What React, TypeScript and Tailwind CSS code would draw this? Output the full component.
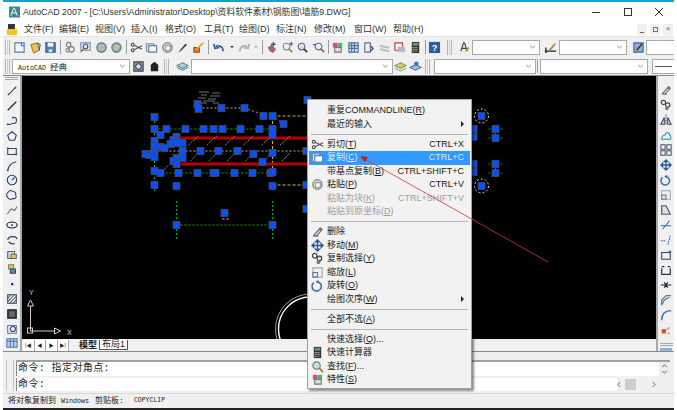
import React from 'react';

const S = ({ children, size = 13 }: { children: React.ReactNode; size?: number }) => (
  <svg viewBox="0 0 14 14" width={size} height={size} fill="none" strokeWidth="1.2">{children}</svg>
);

const icons: Record<string, React.ReactNode> = {
  doc: <><path d="M2 2h10v10H2z" fill="#f4f8ff" stroke="#4a7fb5" /><path d="M9 2v3h3" stroke="#4a7fb5" /></>,
  open: <><path d="M2 4 9 2l2 8-6 3z" fill="#e8c06a" stroke="#a08030" /><path d="M9 2l3 2-1 6" stroke="#555" /></>,
  save: <><path d="M2 2h10v10H2z" fill="#4e83c0" stroke="#2a5a90" /><path d="M4 2h6v4H4z" fill="#fff" /><path d="M5 9h4v3H5z" fill="#ddd" /></>,
  print: <><circle cx="5" cy="4" r="2.5" stroke="#777" /><circle cx="8" cy="9" r="3" stroke="#777" /><circle cx="4" cy="10" r="2" stroke="#888" /></>,
  preview: <><path d="M2 2h10v8H2z" fill="#eef" stroke="#6b8db5" /><circle cx="7" cy="6" r="2.5" stroke="#456" /><path d="M5 8 2 12" stroke="#a07030" strokeWidth="1.6" /></>,
  publish: <><circle cx="7" cy="7" r="5" fill="#9ab8d8" stroke="#4a6a8a" /><path d="M4 5h6M4 9h6" stroke="#e0c040" strokeWidth="1.6" /></>,
  globe: <><circle cx="7" cy="7" r="5" fill="#7aa7d8" stroke="#5a7a9a" /><path d="M6 3 3 8l5 3 3-5z" fill="#d0c070" /></>,
  cut: <><circle cx="3" cy="4" r="1.6" stroke="#444" /><circle cx="3" cy="10" r="1.6" stroke="#444" /><path d="M4.5 4.5 13 9M4.5 9.5 13 5" stroke="#555" /></>,
  copy: <><path d="M1.5 3h8v8h-8z" fill="#d8e4f0" stroke="#7a8fa5" /><path d="M4 5h8.5v7H4z" fill="#f4f8ff" stroke="#5a7fa5" /></>,
  paste: <><circle cx="7" cy="7" r="5" fill="#e8d8a0" stroke="#7a93b5" strokeWidth="1.6" /><path d="M5 5h5v5H5z" fill="#fff" stroke="#999" /></>,
  brush: <><path d="M3 12 5 9l5-6 2 1-6 6z" fill="#444" /><path d="M2 13l2-3 1 1z" fill="#d0a030" /></>,
  block: <><path d="M2 7h6v5H2z" fill="#e88030" stroke="#a05010" /><path d="M6 8 12 2" stroke="#e0b020" strokeWidth="2" /></>,
  undo: <path d="M12 11C12 6 8 4 4 6M2 3l1 5 5-1" stroke="#2a5a9a" strokeWidth="1.7" />,
  redo: <path d="M2 11C2 6 6 4 10 6M12 3l-1 5-5-1" stroke="#aaa" strokeWidth="1.7" />,
  pan: <><path d="M3 7 7 4l5 5-3 4-4-2z" fill="#a06868" /><path d="M9 1v5M6.500 3.500h5" stroke="#2a5a9a" strokeWidth="1.4" /></>,
  zoomr: <><circle cx="6" cy="6" r="3.600" stroke="#889" /><path d="M8.500 8.500 12 12" stroke="#a08040" strokeWidth="1.700" /><path d="M11 1v4M9 3h4" stroke="#2a5a9a" /></>,
  zoomw: <><circle cx="6" cy="6" r="3.600" fill="#dde" stroke="#668" /><path d="M8.500 8.500 12 12" stroke="#333" strokeWidth="1.700" /></>,
  zoomp: <><circle cx="7" cy="6" r="3.600" stroke="#668" /><path d="M9.500 8.500 13 12" stroke="#a06030" strokeWidth="1.700" /><path d="M1 4h3" stroke="#2a5a9a" /></>,
  props: <><path d="M2 2h5v5H2z" fill="#e040a0" /><path d="M7 2h5v5H7z" fill="#40c060" /><path d="M4 7h7v5H4z" fill="#ddd" stroke="#777" /></>,
  design: <><path d="M2 2h10v10H2z" fill="#dbe6f4" stroke="#4a6fa5" /><path d="M2 5h10M2 8h10M5 2v10M8 2v10" stroke="#4a6fa5" /></>,
  sheet: <><path d="M3 2h6v10H3z" fill="#eee" stroke="#668" /><path d="M9 5l3 3-3 3" stroke="#2a5a9a" strokeWidth="1.500" /></>,
  tool: <><path d="M2 4l10 2v6L2 10z" fill="#b8c0c8" /><path d="M2 7l10 2" stroke="#eee" /></>,
  markup: <><path d="M2 2h8v8H2z" fill="#fff" stroke="#d03030" /><path d="M5 6h8v6H5z" fill="#bbb" /></>,
  calc: <><path d="M3 1h8v12H3z" fill="#333" /><path d="M4 2h6v3H4z" fill="#6a9a6a" /><path d="M4 7h6M4 9h6M4 11h6" stroke="#ddd" strokeDasharray="1 1" /></>,
  help: <><path d="M1 1h12v12H1z" fill="#2a5fa8" /><text x="7" y="11" fontSize="10" fontWeight="700" fill="#fff" textAnchor="middle" fontFamily="Liberation Sans">?</text></>,
  style: <><path d="M3 11 6 2h1l3 9M4 8h5" stroke="#444" /><path d="M8 11l4-4" stroke="#c09030" strokeWidth="1.600" /></>,
  dim: <><path d="M1 11h12M2 7v6" stroke="#222" strokeWidth="1.400" /><path d="M6 10 12 3" stroke="#b08030" strokeWidth="1.800" /></>,
  mlead: <><path d="M2 2h10v10H2z" fill="#8aaed6" stroke="#46688e" /><path d="M5 10 11 3" stroke="#333" strokeWidth="1.600" /></>,
  wsgear: <><path d="M2 2h10v10H2z" fill="#8a9aaa" stroke="#444" /><circle cx="7" cy="7" r="3" fill="#dde" stroke="#345" /></>,
  wsdark: <><path d="M3 5 7 2l4 3v7H3z" fill="#222" /></>,
  layer: <><path d="M7 3 13 6 7 9 1 6z" fill="#bcd" stroke="#689" /><path d="M1 8l6 3 6-3" stroke="#689" /></>,
  layer2: <><path d="M7 3 13 6 7 9 1 6z" fill="#e0d050" stroke="#897" /><path d="M1 9l6 3 6-3" stroke="#8a7" /></>,
  layer3: <><path d="M7 5 13 8 7 11 1 8z" fill="#9cc0e8" stroke="#579" /><circle cx="8" cy="4" r="2.500" fill="#4a7ab5" /></>,
  line: <><path d="M3 11 11 3" stroke="#444" /><path d="M2 10h2v2H2zM10 2h2v2h-2z" fill="#1a5fb0" /></>,
  ray: <><path d="M2 12 12 2" stroke="#222" strokeWidth="1.400" /><path d="M6 6h2v2H6z" fill="#1a5fb0" /></>,
  poly: <><path d="M2 11h4M8 3h2c3 0 3 6 0 7H6" stroke="#345" /><path d="M1 10h2v2H1zM7 2h2v2H7z" fill="#1a5fb0" /></>,
  pent: <path d="M7 2 12 6l-2 6H4L2 6z" fill="#eef" stroke="#345" strokeWidth="1.300" />,
  rect: <><path d="M2 4h10v7H2z" stroke="#345" /><path d="M1 3h2v2H1zM11 10h2v2h-2z" fill="#1a5fb0" /></>,
  arc: <><path d="M2 12C3 6 7 3 12 2" stroke="#345" strokeWidth="1.400" /><path d="M1 11h2v2H1z" fill="#1a5fb0" /></>,
  circle: <><circle cx="7" cy="7" r="5.500" fill="#eef" stroke="#345" strokeWidth="1.300" /><path d="M7 7 10 4" stroke="#1a5fb0" strokeWidth="1.500" /></>,
  cloud: <path d="M3 3c2-2 4-1 5 0 3 0 4 2 3 4 2 2 0 5-3 4-2 2-5 1-6-1-2-2-1-5 1-7z" fill="#eef" stroke="#345" />,
  spline: <path d="M1 11c3 1 3-6 6-5s2 4 6-3" stroke="#666" />,
  ellipse: <><ellipse cx="7" cy="7" rx="6" ry="3.500" stroke="#123" strokeWidth="1.300" /><circle cx="7" cy="7" r="1.300" fill="#1a5fb0" /></>,
  earc: <path d="M2 7c1-5 10-5 11-1M3 9c2 2 5 3 7 2" stroke="#345" strokeWidth="1.400" />,
  insert: <><path d="M2 3h8v8H2z" fill="#cde" stroke="#567" /><path d="M6 6h6v5H6z" fill="#e0d040" stroke="#765" /></>,
  makeblk: <><path d="M3 2h6v5H3z" fill="#e0d040" stroke="#876" /><path d="M5 7h6v5H5z" fill="#5a86c0" stroke="#345" /></>,
  point: <path d="M6 6h2.500v2.500H6z" fill="#123" />,
  hatch: <><path d="M2 2h10v10H2z" stroke="#345" /><path d="M2 6l4-4M2 10l8-8M4 12l8-8M8 12l4-4" stroke="#567" /></>,
  grad: <><path d="M2 2h10v10H2z" fill="#345" stroke="#123" /><path d="M4 4h6v6H4z" fill="#765" /></>,
  region: <><path d="M2 3h10v9H2z" fill="#eef" stroke="#579" /><circle cx="8" cy="7" r="3" stroke="#345" /></>,
  table: <><path d="M1 2h12v10H1z" fill="#b8d0ec" stroke="#579" /><path d="M1 5h12M5 2v10M9 2v10" stroke="#579" /></>,
  erase: <><path d="M2 12h6" stroke="#888" /><path d="M3 11 10 3l2 2-6 7z" fill="#c8d0d8" stroke="#678" /><path d="M9 4l2 2" stroke="#d04040" strokeWidth="1.500" /></>,
  copyobj: <><circle cx="4" cy="4" r="2.500" stroke="#333" /><circle cx="9" cy="7" r="2.500" stroke="#333" /><circle cx="8" cy="11" r="2" fill="#777" /></>,
  mirror: <><path d="M7 1v12" stroke="#345" strokeDasharray="2 1" /><path d="M5 4v8H1zM9 4v8h4z" fill="#eef" stroke="#345" /></>,
  offset: <><path d="M2 12c0-3 2-5 4-5 0-3 5-4 5 0 2 0 2 5 1 5z" fill="#eef" stroke="#28a" /></>,
  array: <><path d="M1 1h5v5H1zM8 1h5v5H8zM1 8h5v5H1zM8 8h5v5H8z" stroke="#456" /></>,
  move: <path d="M7 1v12M1 7h12M7 1 5 3h4zM7 13l-2-2h4zM1 7l2-2v4zM13 7l-2-2v4z" stroke="#2a5a9a" strokeWidth="1.500" />,
  rotate: <><path d="M3 4a5 5 0 1 0 4-1" stroke="#3a6ea8" strokeWidth="1.700" /><path d="M8 1 5 3l3 2z" fill="#3a6ea8" /></>,
  scale: <><path d="M2 2h10v10H2z" stroke="#9ab" /><path d="M2 7h5v5H2z" fill="#dde6f0" stroke="#678" /></>,
  stretch: <path d="M2 12V2h5l5 10z" fill="#dde" stroke="#456" strokeWidth="1.300" />,
  trim: <path d="M1 8h12M11 2 3 12" stroke="#2a6ab0" strokeWidth="1.200" />,
  extend: <path d="M1 8h6M12 2l-3 11" stroke="#2a6ab0" strokeDasharray="2 1" />,
  brk: <><path d="M2 4h10v8H2z" stroke="#345" /><path d="M10 2h3v3h-3z" fill="#2a6ab0" /></>,
  brk2: <path d="M2 5v7h10V5M2 3h3M9 3h3" stroke="#234" strokeWidth="1.400" />,
  join: <path d="M1 7h12M5 4l2 3-2 3M9 4 7 7l2 3" stroke="#123" strokeWidth="1.300" />,
  chamfer: <><path d="M2 13V7l5-5h6" stroke="#555" /><path d="M3 12c0-4 4-7 8-8" stroke="#2a6ab0" /></>,
  fillet: <path d="M2 13C2 6 6 2 13 2" stroke="#2a6ab0" strokeWidth="1.500" />,
  explode: <><path d="M2 6h5v5H2z" fill="#e05020" /><path d="M8 7l3-3" stroke="#aaa" strokeWidth="2" /><path d="M9 10h2v2H9z" fill="#d08020" /></>,
  find: <><circle cx="6" cy="6" r="4" fill="#cdd" stroke="#678" /><path d="M9 9l4 4" stroke="#b07030" strokeWidth="1.700" /></>,
};

const Tool = ({ name }: { name: string }) => (
  <div className="flex w-[15.5px] shrink-0 items-center justify-center">
    <S>{icons[name]}</S>
  </div>
);

const Sep = ({ w }: { w: string }) => (
  <div className={`flex h-full shrink-0 items-center justify-center ${w}`}>
    <div className="h-[14px] w-px bg-[#9a9a9a]" />
  </div>
);

const Grip = ({ w }: { w: string }) => (
  <div className={`flex h-full shrink-0 items-center justify-center gap-px ${w}`}>
    <div className="h-[15px] w-px bg-[#b5b5b5]" />
    <div className="h-[15px] w-px bg-[#d0d0d0]" />
    <div className="h-[15px] w-px bg-[#b5b5b5]" />
  </div>
);

const Combo = ({ w, children }: { w: string; children?: React.ReactNode }) => (
  <div className={`flex h-[15px] shrink-0 items-center justify-between border border-[#a8a8a8] bg-white pl-[5px] pr-[3px] ${w}`}>
    <span className="whitespace-pre font-['Liberation_Mono','Noto_Sans_CJK_SC',monospace] leading-none text-[#222]">{children}</span>
    <svg viewBox="0 0 8 5" width="7" height="4" fill="none" stroke="#777"><path d="M1 1l3 3 3-3" /></svg>
  </div>
);

const SmallArrow = ({ w, c }: { w: string; c: string }) => (
  <div className={`flex shrink-0 justify-center ${w}`}>
    <div className="h-0 w-0 border-x-[2px] border-t-[2px] border-x-transparent" style={{ borderTopColor: c }} />
  </div>
);

const menuBar = [
  ['文件', 'F', 'w-[35px]'],
  ['编辑', 'E', 'w-[36px]'],
  ['视图', 'V', 'w-[36px]'],
  ['插入', 'I', 'w-[34px]'],
  ['格式', 'O', 'w-[39px]'],
  ['工具', 'T', 'w-[35px]'],
  ['绘图', 'D', 'w-[37px]'],
  ['标注', 'N', 'w-[38px]'],
  ['修改', 'M', 'w-[40px]'],
  ['窗口', 'W', 'w-[39px]'],
  ['帮助', 'H', 'w-[30px]'],
];

const leftTools = ['line', 'ray', 'poly', 'pent', 'rect', 'arc', 'circle', 'cloud', 'spline', 'ellipse', 'earc', 'insert', 'makeblk', 'point', 'hatch', 'grad', 'region', 'table'];
const rightTools = ['erase', 'copyobj', 'mirror', 'offset', 'array', 'move', 'rotate', 'scale', 'stretch', 'trim', 'extend', 'brk', 'brk2', 'join', 'chamfer', 'fillet', 'explode'];

// grip squares, page coordinates
const grips = [
  [197, 103], [198, 108], [221, 107], [244, 107], [263, 115], [272, 115], [283, 123], [307, 99],
  [154, 116], [154, 128], [166, 128], [185, 128], [203, 128], [213, 128], [222, 128], [240, 128], [259, 128], [272, 128], [272, 134],
  [160, 134], [154, 140], [176, 136], [173, 139], [170, 143], [176, 142], [182, 142], [154, 146], [160, 146], [164, 147], [145, 153], [149, 154], [154, 151], [154, 156],
  [182, 150], [200, 150], [218, 150], [237, 150], [253, 153], [272, 152], [306, 150],
  [176, 157], [182, 157], [173, 160], [176, 163], [262, 161],
  [154, 170], [160, 172], [178, 172], [197, 172], [213, 172], [215, 172], [234, 172], [252, 172], [270, 172], [272, 171],
  [154, 184], [176, 185], [272, 185], [306, 184], [224, 212], [176, 224], [272, 224], [306, 208],
  [473, 128], [473, 136], [473, 163], [473, 171], [481, 115], [495, 128], [495, 137], [495, 163], [495, 172], [481, 185],
];

const Drawing = () => (
  <svg viewBox="22 75 633 263" className="absolute inset-0 h-full w-full" fill="none">
    {/* dimension lines */}
    <path d="M154 128H272M165 172H270M176 224H272M176 200V240M272 200V240" stroke="#00b000" strokeDasharray="2 2" />
    <path d="M272 115V172M272 115H308M272 184H308" stroke="#c8c000" strokeDasharray="3 2" />
    <path d="M154 112V190" stroke="#00a8a8" strokeDasharray="2 2" />
    <path d="M145 150H308M198 107H244" stroke="#b0b0b0" strokeDasharray="2 2" />
    <path d="M244 107 264 114M272 115 283 123" stroke="#999" strokeDasharray="2 2" />
    <path d="M488 128H503M488 137H503M488 163H503M488 172H503M495 124V141M495 159V176" stroke="#00a000" strokeDasharray="2 2" />
    <path d="M180 137H308M180 163H308" stroke="#b30000" strokeWidth="3" />
    {[0, 1, 2, 3, 4, 5].map((i) => (
      <path key={i} d={`M${188 + 18.3 * i} 144l10-9M${190 + 18.3 * i} 160l8-8`} stroke="#888" strokeDasharray="2 1" />
    ))}
    <path d="M164 168l4-4M157 146l4-4" stroke="#888" strokeDasharray="2 1" />
    {/* noisy text block */}
    <path d="M199 91h10M212 92h8M201 94h6M210 95h9M198 97h8M208 98h8M203 100h12M199 102h7M213 102h6" stroke="#ddd" strokeDasharray="1 1" />
    <circle cx="481" cy="115" r="7" stroke="#ddd" strokeDasharray="2 2" />
    <circle cx="481" cy="185" r="7" stroke="#ddd" strokeDasharray="2 2" />
    <path d="M222 218h2M226 218h2" stroke="#ddd" />
    {grips.map(([x, y], i) => (
      <rect key={i} x={x - 3.5} y={y - 3.5} width="7" height="7" fill="#0a4fff" stroke="#4a4a4a" strokeWidth="0.8" />
    ))}
    {/* circle at bottom */}
    <circle cx="310" cy="328" r="32" stroke="#fff" strokeWidth="1.400" />
    <circle cx="310" cy="328" r="35" stroke="#999" />
    {/* UCS icon */}
    <path d="M30 330V305M30 330H55" stroke="#ccc" />
    <path d="M30 299l-3 6h6zM60 330l-6-3v6z" stroke="#ccc" />
    <rect x="27" y="327" width="5" height="5" stroke="#ccc" />
    <text x="31" y="294" fill="#bbb" fontSize="8" textAnchor="middle" fontFamily="Liberation Mono">Y</text>
    <text x="69" y="334" fill="#bbb" fontSize="8" textAnchor="middle" fontFamily="Liberation Mono">X</text>
  </svg>
);

type Item = { t?: string; k?: string; tail?: string; sc?: string; icon?: string; sub?: boolean; off?: boolean; hi?: boolean };

const menu: (Item | 'sep')[] = [
  { t: '重复COMMANDLINE', k: 'R' },
  { t: '最近的输入', sub: true },
  'sep',
  { t: '剪切', k: 'T', sc: 'CTRL+X', icon: 'cut' },
  { t: '复制', k: 'C', sc: 'CTRL+C', icon: 'copy', hi: true },
  { t: '带基点复制', k: 'B', sc: 'CTRL+SHIFT+C' },
  { t: '粘贴', k: 'P', sc: 'CTRL+V', icon: 'paste' },
  { t: '粘贴为块', k: 'K', sc: 'CTRL+SHIFT+V', off: true },
  { t: '粘贴到原坐标', k: 'D', off: true },
  'sep',
  { t: '删除', icon: 'erase' },
  { t: '移动', k: 'M', icon: 'move' },
  { t: '复制选择', k: 'Y', icon: 'copyobj' },
  { t: '缩放', k: 'L', icon: 'scale' },
  { t: '旋转', k: 'O', icon: 'rotate' },
  { t: '绘图次序', k: 'W', sub: true },
  'sep',
  { t: '全部不选', k: 'A' },
  'sep',
  { t: '快速选择', k: 'Q', tail: '...' },
  { t: '快速计算器', icon: 'calc' },
  { t: '查找', k: 'F', tail: '...', icon: 'find' },
  { t: '特性', k: 'S', icon: 'props' },
];

const ContextMenu = () => (
  <div className="absolute left-[307px] top-[99px] w-[165px] border border-[#a0a0a0] bg-[#f2f2f2] px-px pb-px pt-1 shadow-[2px_2px_2px_rgba(0,0,0,0.45)]">
    {menu.map((m, i) =>
      m === 'sep' ? (
        <div key={i} className="flex h-[6.5px] items-center px-[2px]">
          <div className="h-px w-full bg-[#b4b4b4]" />
        </div>
      ) : (
        <div
          key={i}
          className={`relative flex h-[13.5px] items-center pl-[18px] pr-[6px] text-[9px] leading-none ${m.hi ? 'bg-[#3399ff] text-[#dcecff]' : m.off ? 'text-[#a0a0a0]' : 'text-[#222]'}`}
        >
          {m.icon && (
            <span className="absolute left-[2px] top-0">
              <S>{icons[m.icon]}</S>
            </span>
          )}
          <span>
            {m.t}
            {m.k && (
              <>
                (<u>{m.k}</u>)
              </>
            )}
            {m.tail}
          </span>
          {m.sc && <span className="ml-auto">{m.sc}</span>}
          {m.sub && <span className="ml-auto h-0 w-0 border-y-[3px] border-l-[3px] border-y-transparent border-l-[#222]" />}
        </div>
      ),
    )}
  </div>
);

export default function App() {
  return (
    <div className="relative h-[410px] w-[677px] overflow-hidden bg-white font-['Liberation_Sans','Noto_Sans_CJK_SC',sans-serif]">
      <div className="ml-[3px] flex h-[410px] w-[671px] flex-col border-b-2 border-t-2 border-b-[#222] border-t-[#159fd6] bg-[#f0f0f0]">
        {/* title bar */}
        <div className="flex h-[20px] shrink-0 items-center bg-white pl-[6px] text-[#333]">
          <svg viewBox="0 0 12 12" width="11" height="12"><path d="M0 0h12v12H0z" fill="#3d8a8a" /><path d="M2 10 5 2h1l3 8M3 7h5" stroke="#fff" fill="none" /></svg>
          <span className="ml-[3px] whitespace-nowrap text-[8.8px] leading-none">AutoCAD 2007 - [C:\Users\Administrator\Desktop\资料软件素材\钢筋图\墙筋9.DWG]</span>
          <div className="ml-auto flex items-center">
            <div className="mr-[24px] h-px w-[8px] bg-[#333]" />
            <div className="mr-[23px] h-[8px] w-[8px] border border-[#333]" />
            <svg viewBox="0 0 8 8" width="8" height="8" stroke="#333" className="mr-[11px]"><path d="M0 0l8 8M8 0 0 8" /></svg>
          </div>
        </div>
        {/* menu bar */}
        <div className="flex h-[14px] shrink-0 items-center bg-white pl-[3px] text-[9px] leading-none text-[#333]">
          <svg viewBox="0 0 12 12" width="12" height="12" className="mr-[6px]"><path d="M2 1h7v10H2z" fill="#334" /><path d="M1 6h10v6H1z" fill="#f0c820" /></svg>
          {menuBar.map(([t, k, w]) => (
            <span key={t} className={`shrink-0 whitespace-nowrap ${w}`}>
              {t}({k})
            </span>
          ))}
          <div className="ml-auto mr-[1px] flex gap-[3px]">
            <div className="flex h-[11px] w-[10px] items-end justify-center bg-[#f0f0f0] pb-[2px]"><div className="h-px w-[4px] bg-[#666]" /></div>
            <div className="flex h-[11px] w-[10px] items-center justify-center bg-[#f0f0f0]"><div className="h-[5px] w-[5px] border border-[#777]" /></div>
            <div className="flex h-[11px] w-[10px] items-center justify-center bg-[#f0f0f0] text-[8px] text-[#667]">×</div>
          </div>
        </div>
        {/* standard toolbar */}
        <div className="flex h-[21px] shrink-0 items-center border-t border-[#e4e4e4]">
          <Grip w="w-[9px]" />
          {['doc', 'open', 'save'].map((n) => <Tool key={n} name={n} />)}
          <Sep w="w-[4px]" />
          {['print', 'preview', 'publish', 'globe'].map((n) => <Tool key={n} name={n} />)}
          <Sep w="w-[4px]" />
          {['cut', 'copy', 'paste', 'brush', 'block'].map((n) => <Tool key={n} name={n} />)}
          <Sep w="w-[5px]" />
          <Tool name="undo" />
          <SmallArrow w="w-[10px]" c="#333" />
          <Tool name="redo" />
          <SmallArrow w="w-[8px]" c="#aaa" />
          <Sep w="w-[4px]" />
          {['pan', 'zoomr', 'zoomw', 'zoomp'].map((n) => <Tool key={n} name={n} />)}
          <Sep w="w-[4px]" />
          {['props', 'design', 'sheet', 'tool', 'markup', 'calc'].map((n) => <Tool key={n} name={n} />)}
          <Sep w="w-[4px]" />
          <Tool name="help" />
          <Grip w="w-[14px]" />
          <Tool name="style" />
          <Combo w="w-[68px]" />
          <div className="w-[3px] shrink-0" />
          <Tool name="dim" />
          <Combo w="w-[68px]" />
          <div className="w-[4px] shrink-0" />
          <Tool name="mlead" />
          <div className="h-[15px] flex-1 border border-r-0 border-[#a8a8a8] bg-white" />
        </div>
        {/* workspace and layer toolbar */}
        <div className="flex h-[18px] shrink-0 items-center">
          <Grip w="w-[9px]" />
          <Combo w="w-[118px]">
            <span className="text-[6.7px]">AutoCAD </span>
            <span className="text-[8.500px]">经典</span>
          </Combo>
          <div className="w-[1px] shrink-0" />
          <Tool name="wsgear" />
          <Tool name="wsdark" />
          <Grip w="w-[9px]" />
          <div className="w-[4px] shrink-0" />
          <Tool name="layer" />
          <Combo w="w-[202px]" />
          <Tool name="layer2" />
          <Tool name="layer3" />
          <Grip w="w-[7px]" />
          <div className="w-[3px] shrink-0" />
          <Combo w="w-[102px]" />
          <Sep w="w-[4px]" />
          <Combo w="w-[108px]" />
          <div className="w-[4px] shrink-0" />
          <div className="flex h-[15px] flex-1 items-center border border-r-0 border-[#a8a8a8] bg-white px-[2px]"><div className="h-px w-full bg-[#555]" /></div>
        </div>
        {/* drawing area */}
        <div className="flex h-[277px] shrink-0 border-y border-[#8a8a8a]">
          <div className="flex w-[19px] shrink-0 flex-col items-center border-r-2 border-[#a8a8a8] pt-[1px]">
            <div className="mb-[4px] h-[3px] w-[13px] border-y border-[#a8a8a8]" />
            {leftTools.map((n) => (
              <div key={n} className="flex h-[15px] items-center">
                <S size={12}>{icons[n]}</S>
              </div>
            ))}
          </div>
          <div className="flex min-w-0 flex-1 flex-col">
            <div className="relative h-[263px] bg-black">
              <Drawing />
            </div>
            <div className="flex h-[12px] items-center pl-[1px] text-[9px] leading-none text-[#222]">
              {['|◀', '◀', '▶', '▶|'].map((a) => (
                <div key={a} className="flex h-[11px] w-[11.5px] items-center justify-center border-r border-[#aaa] bg-white text-[5px] text-[#222]">{a}</div>
              ))}
              <span className="ml-[9px] w-[20px] text-center font-bold">模型</span>
              <span className="ml-[1px] w-[29px] border-x border-b border-[#555] bg-white text-center">布局1</span>
            </div>
          </div>
          <div className="flex w-[18px] shrink-0 flex-col items-center border-l-2 border-[#a8a8a8] pt-[6px]">
            {rightTools.map((n) => (
              <div key={n} className="flex h-[15px] items-center">
                <S size={12}>{icons[n]}</S>
              </div>
            ))}
            <div className="mt-[6px] h-[3px] w-[13px] border-y border-[#a8a8a8]" />
            <div className="mt-[2px] h-[3px] w-[12px] bg-[#8ab4dc]" />
          </div>
        </div>
        {/* command window */}
        <div className="flex flex-1 pb-[2px] pl-[3px] pr-[4px] pt-[8px] font-['Liberation_Mono','Noto_Sans_CJK_SC',monospace] text-[10px] leading-none text-[#222]">
          <div className="mr-[2px] w-[8px] shrink-0 border-x border-[#c4c4c4]" />
          <div className="flex min-w-0 flex-1 flex-col">
            <div className="flex h-[16px] shrink-0 border-t-2 border-[#a0a0a0] bg-white">
              <span className="flex flex-1 items-center border-l border-[#888] pl-[1px] tracking-[0.4px]">命令: 指定对角点:</span>
              <div className="flex w-[11px] shrink-0 flex-col items-center justify-center gap-[2px] bg-[#eee]">
                <svg viewBox="0 0 8 5" width="7" height="4" fill="none" stroke="#444"><path d="M1 4l3-3 3 3" /></svg>
                <svg viewBox="0 0 8 5" width="7" height="4" fill="none" stroke="#444"><path d="M1 1l3 3 3-3" /></svg>
              </div>
            </div>
            <div className="mt-[2px] flex h-[13px] shrink-0">
              <span className="flex flex-1 items-center border-l border-[#888] bg-white pl-[1px] tracking-[0.4px]">命令:</span>
              <div className="flex w-[42px] shrink-0 items-center justify-between pr-[3px]">
                <svg viewBox="0 0 5 8" width="4" height="7" fill="none" stroke="#444"><path d="M4 1 1 4l3 3" /></svg>
                <div className="h-[11px] w-[11px] bg-[#cdcdcd]" />
                <svg viewBox="0 0 5 8" width="4" height="7" fill="none" stroke="#444" className="ml-[12px]"><path d="M1 1l3 3-3 3" /></svg>
              </div>
              <div className="w-[11px] shrink-0" />
            </div>
          </div>
        </div>
        {/* status bar */}
        <div className="flex h-[15px] shrink-0 items-center border-t border-[#d8d8d8] pl-[5px] font-['Liberation_Mono','Noto_Sans_CJK_SC',monospace] text-[8px] leading-none text-[#222]">
          <span>将对象复制到</span>
          <span className="ml-[5px] text-[6.7px]">Windows</span>
          <span className="ml-[6px]">剪贴板:</span>
          <span className="ml-[10px] text-[6.5px]">COPYCLIP</span>
        </div>
      </div>
      {/* menu and annotation over the window */}
      <ContextMenu />
      <svg viewBox="0 0 677 410" className="pointer-events-none absolute inset-0 h-[410px] w-[677px]" fill="none">
        <path d="M548 262 365 159" stroke="#e03030" strokeWidth="0.800" />
        <path d="M360 156 368 157 365 162z" fill="#e01010" />
      </svg>
    </div>
  );
}
